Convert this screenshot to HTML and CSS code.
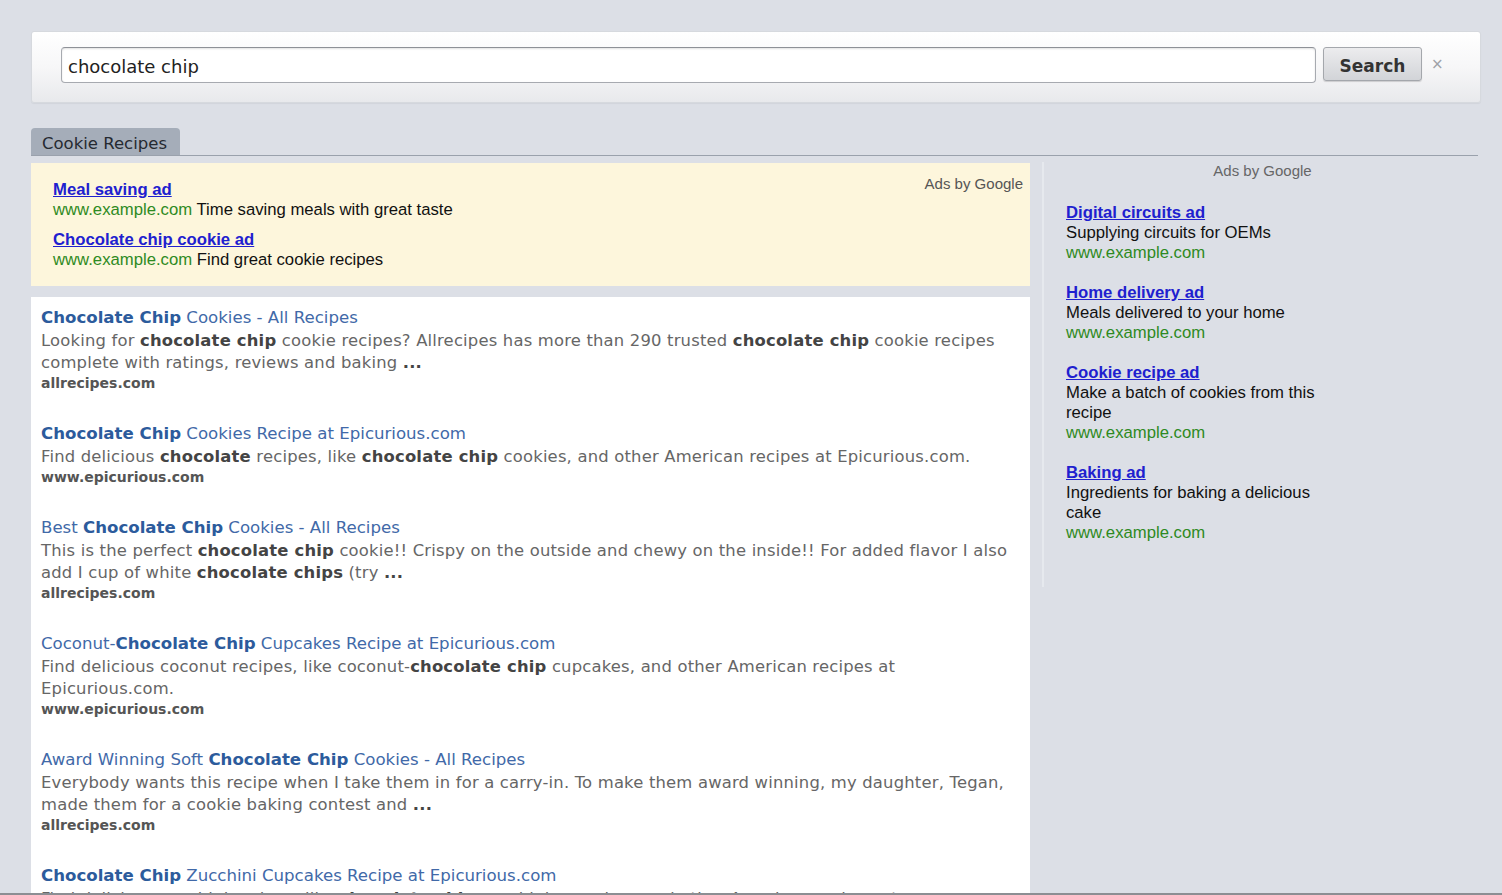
FILE: index.html
```html
<!DOCTYPE html>
<html lang="en">
<head>
<meta charset="utf-8">
<title>chocolate chip - Search</title>
<link rel="stylesheet" href="styles.css">
</head>
<body>
<div class="page">
  <div class="searchbar">
    <div class="query">chocolate chip</div>
    <button class="search-btn">Search</button>
    <span class="clear">×</span>
  </div>

  <div class="tabs">
    <div class="tab">Cookie Recipes</div>
  </div>

  <div class="content">
    <div class="main">
      <div class="top-ads">
        <div class="ad-list">
          <div class="ad">
            <a class="ad-title" href="#">Meal saving ad</a>
            <div class="ad-line"><span class="ad-url">www.example.com</span> Time saving meals with great taste</div>
          </div>
          <div class="ad">
            <a class="ad-title" href="#">Chocolate chip cookie ad</a>
            <div class="ad-line"><span class="ad-url">www.example.com</span> Find great cookie recipes</div>
          </div>
        </div>
        <div class="ads-label">Ads by Google</div>
      </div>

      <div class="results">
        <div class="result">
          <div class="r-title"><b>Chocolate Chip</b> Cookies - All Recipes</div>
          <div class="r-snippet">Looking for <b>chocolate chip</b> cookie recipes? Allrecipes has more than 290 trusted <b>chocolate chip</b> cookie recipes<br>complete with ratings, reviews and baking <b>...</b></div>
          <div class="r-url">allrecipes.com</div>
        </div>
        <div class="result">
          <div class="r-title"><b>Chocolate Chip</b> Cookies Recipe at Epicurious.com</div>
          <div class="r-snippet">Find delicious <b>chocolate</b> recipes, like <b>chocolate chip</b> cookies, and other American recipes at Epicurious.com.</div>
          <div class="r-url">www.epicurious.com</div>
        </div>
        <div class="result">
          <div class="r-title">Best <b>Chocolate Chip</b> Cookies - All Recipes</div>
          <div class="r-snippet">This is the perfect <b>chocolate chip</b> cookie!! Crispy on the outside and chewy on the inside!! For added flavor I also<br>add I cup of white <b>chocolate chips</b> (try <b>...</b></div>
          <div class="r-url">allrecipes.com</div>
        </div>
        <div class="result">
          <div class="r-title">Coconut-<b>Chocolate Chip</b> Cupcakes Recipe at Epicurious.com</div>
          <div class="r-snippet">Find delicious coconut recipes, like coconut-<b>chocolate chip</b> cupcakes, and other American recipes at<br>Epicurious.com.</div>
          <div class="r-url">www.epicurious.com</div>
        </div>
        <div class="result">
          <div class="r-title">Award Winning Soft <b>Chocolate Chip</b> Cookies - All Recipes</div>
          <div class="r-snippet">Everybody wants this recipe when I take them in for a carry-in. To make them award winning, my daughter, Tegan,<br>made them for a cookie baking contest and <b>...</b></div>
          <div class="r-url">allrecipes.com</div>
        </div>
        <div class="result">
          <div class="r-title"><b>Chocolate Chip</b> Zucchini Cupcakes Recipe at Epicurious.com</div>
          <div class="r-snippet">Find delicious zucchini recipes, like <b>chocolate chip</b> zucchini cupcakes, and other American recipes at<br>Epicurious.com.</div>
          <div class="r-url">www.epicurious.com</div>
        </div>
      </div>
    </div>

    <div class="side">
      <div class="side-inner">
        <div class="side-label">Ads by Google</div>
        <div class="side-ad">
          <a class="ad-title" href="#">Digital circuits ad</a>
          <div class="side-desc">Supplying circuits for OEMs</div>
          <div class="ad-url">www.example.com</div>
        </div>
        <div class="side-ad">
          <a class="ad-title" href="#">Home delivery ad</a>
          <div class="side-desc">Meals delivered to your home</div>
          <div class="ad-url">www.example.com</div>
        </div>
        <div class="side-ad">
          <a class="ad-title" href="#">Cookie recipe ad</a>
          <div class="side-desc">Make a batch of cookies from this recipe</div>
          <div class="ad-url">www.example.com</div>
        </div>
        <div class="side-ad">
          <a class="ad-title" href="#">Baking ad</a>
          <div class="side-desc">Ingredients for baking a delicious cake</div>
          <div class="ad-url">www.example.com</div>
        </div>
      </div>
    </div>
  </div>
</div>
</body>
</html>
```

FILE: styles.css
```css
* { box-sizing: border-box; }

html, body {
  margin: 0;
  padding: 0;
}

body {
  background: #dcdfe6;
  font-family: "DejaVu Sans", Verdana, sans-serif;
  color: #333;
}

.page {
  height: 895px;
  overflow: hidden;
  padding: 31px 21px 0 31px;
  border-bottom: 2px solid #8c8e93;
}

/* search bar */
.searchbar {
  height: 72px;
  display: flex;
  align-items: flex-start;
  padding: 15px 0 0 29px;
  background: linear-gradient(#ffffff 0%, #f7f7f8 50%, #e8e9ec 100%);
  border: 1px solid #d6d9de;
  border-radius: 3px;
  box-shadow: 0 1px 1px rgba(0,0,0,0.05);
}

.query {
  width: 1255px;
  height: 36px;
  border: 1px solid #a7aab0;
  border-top-color: #8e9197;
  border-radius: 4px;
  background: #fff;
  box-shadow: inset 0 1px 2px rgba(0,0,0,0.12);
  font-size: 18px;
  line-height: 34px;
  padding: 2px 0 0 6px;
  color: #222;
}

.search-btn {
  margin-left: 7px;
  width: 99px;
  height: 34px;
  border: 1px solid #a4a7ac;
  border-radius: 3px;
  background: linear-gradient(#ececee, #d2d4d8);
  box-shadow: 0 1px 1px rgba(0,0,0,0.15);
  font-family: "DejaVu Sans", Verdana, sans-serif;
  font-weight: bold;
  font-size: 17px;
  line-height: 34px;
  color: #333;
  padding: 1px 0 0 0;
}

.clear {
  margin-left: 9px;
  font-size: 15px;
  line-height: 34px;
  color: #9ea1a7;
}

/* tabs */
.tabs {
  margin-top: 25px;
  margin-right: 3px;
  border-bottom: 1px solid #9aa1ac;
  display: flex;
}

.tab {
  width: 149px;
  height: 27px;
  background: #a5adb9;
  border-radius: 4px 4px 0 0;
  font-size: 16.5px;
  line-height: 32px;
  padding-left: 11px;
  color: #252a31;
}

/* content */
.content {
  display: flex;
}

.main {
  width: 999px;
  padding-top: 7px;
}

.top-ads {
  height: 123px;
  background: #fdf6dc;
  display: flex;
  justify-content: space-between;
  padding: 17px 7px 0 22px;
  font-family: "Liberation Sans", Arial, sans-serif;
}

.ad {
  margin-bottom: 10px;
}

.ad-title {
  display: block;
  font-family: "Liberation Sans", Arial, sans-serif;
  font-weight: bold;
  font-size: 16.7px;
  line-height: 20px;
  color: #2020cf;
  text-decoration: underline;
}

.ad-line {
  font-size: 16.7px;
  line-height: 20px;
  color: #111;
}

.ad-url {
  color: #2e8a22;
  font-family: "Liberation Sans", Arial, sans-serif;
  font-size: 16.7px;
  line-height: 20px;
}

.ads-label {
  font-size: 15px;
  line-height: 17px;
  color: #555;
  margin-top: -5px;
}

.results {
  margin-top: 11px;
  background: #fff;
  padding: 9px 10px 0 10px;
  min-height: 700px;
}

.result {
  margin-bottom: 29px;
}

.r-title {
  font-size: 16.6px;
  line-height: 23px;
  color: #4169a8;
  white-space: nowrap;
}

.r-title b {
  color: #2c5b9c;
}

.r-snippet {
  font-size: 16.4px;
  letter-spacing: 0.19px;
  line-height: 22px;
  padding-top: 1px;
  margin-bottom: -1px;
  color: #666;
  white-space: nowrap;
}

.r-snippet b {
  color: #444;
}

.r-url {
  font-size: 14px;
  line-height: 20px;
  font-weight: bold;
  color: #555;
}

/* side */
.side {
  flex: 1;
  padding-top: 6px;
  padding-left: 12px;
}

.side-inner {
  border-left: 2px solid #e6e9ee;
  padding: 0 0 44px 22px;
  font-family: "Liberation Sans", Arial, sans-serif;
}

.side-label {
  text-align: center;
  font-size: 15px;
  line-height: 17px;
  color: #666;
  margin-left: -22px;
  margin-bottom: 24px;
}

.side-ad {
  width: 265px;
  margin-bottom: 20px;
}

.side-ad:last-child {
  margin-bottom: 0;
}

.side-desc {
  font-size: 16.7px;
  line-height: 20px;
  color: #111;
}

.side-ad .ad-url {
  display: block;
}
```
